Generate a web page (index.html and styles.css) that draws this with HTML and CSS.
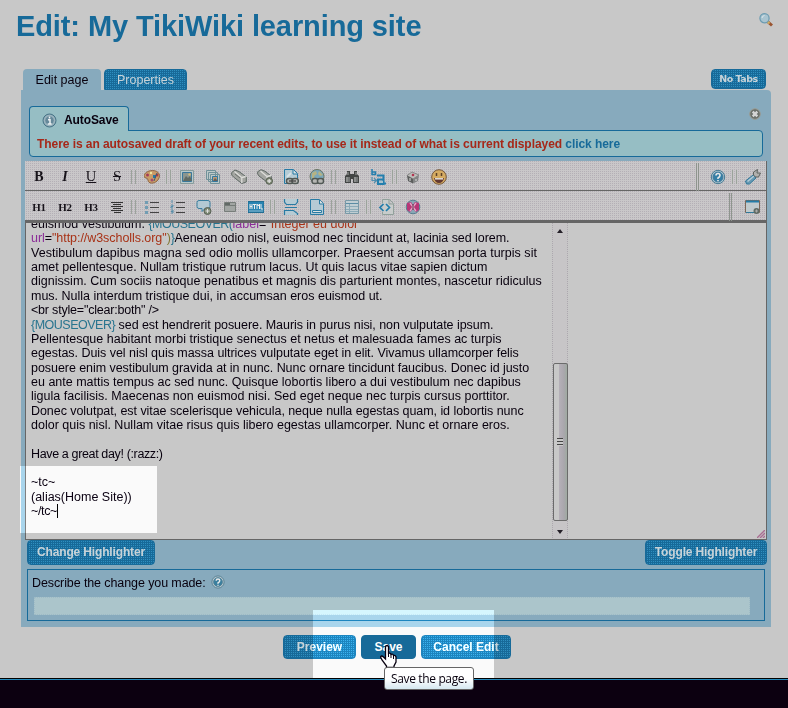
FILE: index.html
```html
<!DOCTYPE html>
<html lang="en">
<head>
<meta charset="utf-8">
<title>Edit: My TikiWiki learning site</title>
<link rel="stylesheet" href="styles.css">
</head>
<body>
<main class="page">
  <header class="head">
    <h1>Edit: My TikiWiki learning site</h1>
    <svg class="search" width="15" height="14" viewBox="0 0 15 14"><path d="M8.500 8.500l4.500 4" stroke="#9a5430" stroke-width="3"/><path d="M8.500 8.500l2 2" stroke="#d5b060" stroke-width="2"/><circle cx="5.500" cy="5.200" r="4.600" fill="#a9c4d0" stroke="#6b9bb1" stroke-width="1.200"/><path d="M3 5q0-2 2.500-2.500" stroke="#dce6ea" fill="none"/></svg>
  </header>
  <nav class="tabs"><span class="tab active">Edit page</span><span class="tab dark">Properties</span><span class="notabs dark">No Tabs</span></nav>
  <section class="panel">
    <div class="savetop">
      <div class="savetab"><svg width="15" height="15" viewBox="0 0 15 15"><circle cx="7.500" cy="7.500" r="6.500" fill="#8eabb8" stroke="#477386"/><circle cx="7.500" cy="7.500" r="4.800" fill="#66899a" stroke="#a9bfc7"/><path d="M7.500 3.500v2M6 6.700h2v4M5.700 11h4" stroke="#edf2f3" stroke-width="1.500" fill="none"/></svg>AutoSave</div>
      <svg class="close" width="12" height="12" viewBox="0 0 12 12"><circle cx="6" cy="6" r="5.300" fill="#6c706b" stroke="#9b9c93"/><path d="M3.700 3.700l4.600 4.600M8.300 3.700L3.700 8.300" stroke="#d5d5d5" stroke-width="2.400"/></svg>
    </div>
    <div class="notice"><span>There is an autosaved draft of your recent edits, to use it instead of what is current displayed <a>click here</a></span></div>

    <div class="toolbar first">
      <b class="tool">B</b><i class="tool bold">I</i><u class="tool plain">U</u><s class="tool plain">S</s><em class="sep"></em>
      <span class="tool"><svg viewBox="0 0 16 16"><path d="M8.500 1.500C3 1.500 0 5 0 7c0 3 4 1 4 4 0 4 6 4 9 1 5-5 2-10.500-4.500-10.500z" fill="#c99b68" stroke="#8e6544"/><circle cx="3.500" cy="6" r="1.500" fill="#a33b58"/><circle cx="7" cy="4" r="1.200" fill="#eee6a0"/><path d="M9 6h3v3H9z" fill="#2277a8"/><circle cx="13" cy="6" r="1.500" fill="#b43645"/><circle cx="8" cy="11" r="1.500" fill="#a24c6d"/><path d="M13 4l-3 8" stroke="#405d70"/></svg></span><em class="sep"></em>
      <span class="tool"><svg viewBox="0 0 16 16"><path d="M1.500 1.500h13v13h-13z" fill="#b9c9ca" stroke="#879c9c"/><path d="M3.500 3.500h9v9h-9z" fill="#8b9690" stroke="#39779a"/><path d="M4 12l3-5 2 2 2-2 2 5" fill="#616b64"/><circle cx="10.500" cy="5.500" r="1.200" fill="#d1bd7e"/></svg></span>
      <span class="tool"><svg viewBox="0 0 16 16"><path d="M1.500 1.500h9v9h-9zM3.500 3.500h9v9h-9zM5.500 5.500h9v9h-9z" fill="#bcc9ca" stroke="#719199"/><path d="M7.500 7.500h5v5h-5z" fill="#b99a79" stroke="#3279a0"/><path d="M8 12l2-3 3 3" fill="#655f5a"/></svg></span>
      <span class="tool"><svg viewBox="0 0 16 16"><path d="M.7 6V3.500L4 1l4 1.500 7.300 5.500v5l-4.500 1.500L2.500 8z" fill="#a3a5a1" stroke="#5f6965"/><path d="M3.500 2.500l7.300 6v5.500M10.800 8.500l4-1" fill="none" stroke="#dededb" stroke-width="1.300"/><path d="M4 5l5 4" stroke="#6d716e"/></svg></span>
      <span class="tool"><svg viewBox="0 0 16 16"><path d="M.7 5V2.700L4 .7l4 1.500 6.300 5v4.500L10 13 2 7z" fill="#a3a5a1" stroke="#5f6965"/><path d="M3.500 2l6.500 5.500V12M10 7.500l4-1" fill="none" stroke="#dededb" stroke-width="1.300"/><circle cx="12.200" cy="12" r="3.300" fill="#7f8a74" stroke="#596156"/><path d="M12.200 10v4M10.200 12h4" stroke="#ddd" stroke-width="1.300"/></svg></span>
      <span class="tool"><svg viewBox="0 0 16 16"><path d="M1.500.5h9l4 4v10h-13z" fill="#b5cbd5" stroke="#267aa5"/><path d="M10 1v4h4" fill="#dce4e6" stroke="#267aa5"/><path d="M4 8l4-4" stroke="#d7e2e6" stroke-width="2"/><rect x="3.500" y="9.500" width="6.500" height="5" rx="2.300" fill="#b5b6b3" stroke="#515855" stroke-width="1.500"/><rect x="9" y="9.500" width="6.300" height="5" rx="2.300" fill="#b5b6b3" stroke="#515855" stroke-width="1.500"/><path d="M6 12h7" stroke="#444" stroke-width="1.300"/></svg></span>
      <span class="tool"><svg viewBox="0 0 16 16"><circle cx="8" cy="7.500" r="7" fill="#7ba8bb" stroke="#6d7562"/><path d="M3 4l4-2 1 3-3 2 1 3-3 1M10 2l4 4-3 1-2-2z" fill="#b6b384"/><rect x="3" y="9.500" width="6" height="5" rx="2.300" fill="#b5b6b3" stroke="#515855" stroke-width="1.500"/><rect x="8.500" y="9.500" width="6" height="5" rx="2.300" fill="#b5b6b3" stroke="#515855" stroke-width="1.500"/></svg></span><em class="sep"></em>
      <span class="tool"><svg viewBox="0 0 16 16"><path d="M3 2h3v3h4V2h3v3l2 2v7H9v-4H7v4H1V7l2-2z" fill="#424544"/><path d="M2 8h4v5H2zM10 8h4v5h-4z" fill="#747777"/><path d="M4 3v3M12 3v3M3 8v5M11 8v5" stroke="#a4a6a4"/></svg></span>
      <span class="tool"><svg viewBox="0 0 16 16"><path d="M2 0v5.500h3.500V3H2" fill="none" stroke="#237fae" stroke-width="1.500"/><path d="M7 6.500h6.500V15H8v-4.500h5.500M13.500 14.500H16" fill="none" stroke="#237fae" stroke-width="2"/><path d="M2 8v3.500h4M4 9l2.500 2.500L4 14" fill="none" stroke="#4f8eaf" stroke-width="1.200"/><path d="M9 12h4v2H9z" fill="#a7c2ce"/></svg></span><em class="sep"></em>
      <span class="tool"><svg viewBox="0 0 16 16"><path d="M2 6.500L7 3l7 3-6 4z" fill="#bdbdba" stroke="#888"/><path d="M2 6.500L8 10v4.500L3 12z" fill="#5c5e5d"/><path d="M8 10l6-4-1 6-5 2.500z" fill="#828484"/><circle cx="8" cy="6" r="1.300" fill="#b23551"/><path d="M5 9v3M11 10v2" stroke="#ddd"/></svg></span>
      <span class="tool"><svg viewBox="0 0 16 16"><circle cx="8" cy="8" r="7.300" fill="#d5ab62" stroke="#75573b"/><path d="M5.500 4v3M10.500 4v3" stroke="#5c4027" stroke-width="1.500"/><path d="M3 9h10q-1 5-5 5T3 9z" fill="#623832"/><path d="M4 9.800h8" stroke="#e3e0dc" stroke-width="1.500"/></svg></span>
      <div class="right"><em class="tall"></em><span class="tool"><svg viewBox="0 0 16 16"><circle cx="8" cy="8" r="6.700" fill="#a9c3cf" stroke="#497b93"/><circle cx="8" cy="8" r="4.900" fill="#347fa6" stroke="#42799a"/><path d="M6 6.500q0-2 2-2t2 1.800Q10 8 8 9v1M8 11v1.300" stroke="#e8e8e8" stroke-width="1.600" fill="none"/></svg></span><em class="sep"></em><span class="tool last"><svg viewBox="0 0 16 16"><path d="M8 6l3 3-6.500 6H1.500L.5 12z" fill="#669ab4" stroke="#327798"/><path d="M2.500 12.500L9 7" stroke="#b5ced9" stroke-width="1.300"/><path d="M8.500 6V3l4-2.500-.5 3.500 3.500 0-2 4h-3z" fill="#b1b1ae" stroke="#5d625f"/></svg></span></div>
    </div>
    <div class="toolbar second">
      <b class="tool hh">H1</b><b class="tool hh">H2</b><b class="tool hh">H3</b>
      <span class="tool"><svg viewBox="0 0 16 16"><path d="M2 3.500h12M4 5.500h8M2 7.500h12M4 9.500h8M2 11.500h12M5 13.500h7" stroke="#333"/></svg></span><em class="sep"></em>
      <span class="tool"><svg viewBox="0 0 16 16"><path d="M6 3.500h9M6 8.500h9M6 13.500h9" stroke="#444"/><path d="M1 2h3v3H1zM1 7h3v3H1zM1 12h3v3H1z" fill="#719db3"/></svg></span>
      <span class="tool"><svg viewBox="0 0 16 16"><path d="M6 3.500h9M6 8.500h9M6 13.500h9" stroke="#444"/><path d="M2 1v3M1 6h2v1.500H1V9h2M1 11h2v3H1M1 12.500h2" stroke="#558ca8" fill="none"/></svg></span>
      <span class="tool"><svg viewBox="0 0 16 16"><path d="M3 1.500h9q2 0 2 2v4q0 2-2 2H9l-3 3v-3H3q-2 0-2-2v-4q0-2 2-2z" fill="#b3c9d3" stroke="#397f9f"/><circle cx="11.500" cy="12" r="3.500" fill="#7f8b75" stroke="#596156"/><path d="M11.500 10v4M9.500 12h4" stroke="#ddd"/></svg></span>
      <span class="tool"><svg viewBox="0 0 16 16"><path d="M2.500 3.500h11v9h-11z" fill="#a1a5a3" stroke="#777d7a"/><path d="M3 4h5v2H3z" fill="#616966"/><path d="M3 6.500h10" stroke="#747a77"/></svg></span>
      <span class="tool"><svg viewBox="0 0 16 16"><path d="M0 2.500h16v11H0z" fill="#2984b2" stroke="#216d92"/><path d="M2 5v5M4 5v5M2 7.500h2M5 5.500h3M6.500 5v5M9 10V5l1.200 2 1.300-2v5M13 5v5h2" stroke="#eee" fill="none"/><path d="M1 12h14" stroke="#8cb8cd"/></svg></span><em class="sep"></em>
      <span class="tool"><svg viewBox="0 0 16 16"><path d="M1.500 0v3l2 2.500h9l2-2.500V0M2 8.500h12M1.500 16v-4.500h9l4 3V16" fill="#b6cbd4" stroke="#287ba4" stroke-width="1.200"/></svg></span>
      <span class="tool"><svg viewBox="0 0 16 16"><path d="M1.500.5h9l4 4v11h-13z" fill="#b5cbd5" stroke="#287ba4"/><path d="M10.500 1v4h4M3.500 11.500h9v2h-9z" fill="#dce3e4" stroke="#287ba4"/></svg></span><em class="sep"></em>
      <span class="tool"><svg viewBox="0 0 16 16"><path d="M1.500 1.500h13v13h-13z" fill="#c0ced3" stroke="#7899a7"/><path d="M2 4.500h12" stroke="#5b8ca4"/><path d="M5.500 5v9M2 7.500h12M2 10.500h12M2 12.500h12" stroke="#8cabb8"/></svg></span><em class="sep"></em>
      <span class="tool"><svg viewBox="0 0 16 16"><path d="M3.500 4V.5h7l4 4v11h-11V13M10 1v4h4" fill="#c8cccb" stroke="#91a19b"/><path d="M4.500 5L1 8.500 4.500 12M7 5l3.500 3.500L7 12" stroke="#237daa" stroke-width="1.700" fill="none"/></svg></span>
      <span class="tool"><svg viewBox="0 0 16 16"><circle cx="8" cy="8" r="6.800" fill="#87a7b5" stroke="#587d90"/><path d="M2 4l4-1 2 3 2-3 4 1v7l-3 2-3-3-3 3-3-2z" fill="#b83677"/><path d="M5 4l6 8M11 4l-6 8" stroke="#e3a9c7" stroke-width="1.300"/><path d="M8 5v6" stroke="#5c3651"/></svg></span>
      <div class="right"><em class="tall"></em><span class="tool last"><svg viewBox="0 0 16 16"><path d="M.5 1.500h14v12H.5z" fill="#c0cacd" stroke="#7d6758"/><path d="M1 2.500h13" stroke="#237ca8" stroke-width="2"/><path d="M1 13.500h8" stroke="#327a9b"/><circle cx="11.500" cy="12" r="3" fill="#606b65"/><path d="M10 12h3M11.500 10.500v3" stroke="#aaa"/></svg></span></div>
    </div>

    <div class="editor">
      <div class="text">
        <p>euismod vestibulum. <span class="teal">{MOUSEOVER(</span><span class="purple">label</span>=<span class="red">"Integer eu dolor"</span></p>
        <p class="t1"><span class="purple">url</span>=<span class="red">"http://w3scholls.org"</span><span class="olive">)</span><span class="teal">}</span>Aenean odio nisl, euismod nec tincidunt at, lacinia sed lorem.</p>
        <p class="w1">Vestibulum dapibus magna sed odio mollis ullamcorper. Praesent accumsan porta turpis sit</p>
        <p>amet pellentesque. Nullam tristique rutrum lacus. Ut quis lacus vitae sapien dictum</p>
        <p class="w1">dignissim. Cum sociis natoque penatibus et magnis dis parturient montes, nascetur ridiculus</p>
        <p>mus. Nulla interdum tristique dui, in accumsan eros euismod ut.</p>
        <p class="t3">&lt;br style="clear:both" /&gt;</p>
        <p class="t1"><span class="teal">{MOUSEOVER}</span> sed est hendrerit posuere. Mauris in purus nisi, non vulputate ipsum.</p>
        <p>Pellentesque habitant morbi tristique senectus et netus et malesuada fames ac turpis</p>
        <p class="t2">egestas. Duis vel nisl quis massa ultrices vulputate eget in elit. Vivamus ullamcorper felis</p>
        <p class="t1">posuere enim vestibulum gravida at in nunc. Nunc ornare tincidunt faucibus. Donec id justo</p>
        <p>eu ante mattis tempus ac sed nunc. Quisque lobortis libero a dui vestibulum nec dapibus</p>
        <p class="w1">ligula facilisis. Maecenas non euismod nisi. Sed eget neque nec turpis cursus porttitor.</p>
        <p class="t1">Donec volutpat, est vitae scelerisque vehicula, neque nulla egestas quam, id lobortis nunc</p>
        <p>dolor quis nisl. Nullam vitae risus quis libero egestas ullamcorper. Nunc et ornare eros.</p>
        <p></p>
        <p class="t4">Have a great day! (:razz:)</p>
        <p></p>
        <p>~tc~</p>
        <p>(alias(Home Site))</p>
        <p class="t4">~/tc~<span class="caret"></span></p>
      </div>
      <div class="scroll"><span class="arrow up"></span><div class="thumb"><span class="grip"></span></div><span class="arrow"></span></div>
      <svg class="resize" width="8" height="8" viewBox="0 0 8 8"><path d="M0 8L8 0M3 8l5-5M6 8l2-2" stroke="#a96d91" stroke-width="1.400"/></svg>
    </div>
    <div class="hlrow"><span class="button dark change">Change Highlighter</span><span class="button dark toggle">Toggle Highlighter</span></div>
    <div class="describe">
      <label>Describe the change you made: <svg width="14" height="14" viewBox="0 0 16 16"><circle cx="8" cy="8" r="7" fill="#b1c4cc" stroke="#577f91"/><circle cx="8" cy="8" r="5" fill="#397f9f" stroke="#527f95"/><path d="M6 6.500q0-2 2-2t2 1.800Q10 8 8 9v1M8 11v1.300" stroke="#e8e8e8" stroke-width="1.700" fill="none"/></svg></label>
      <div class="field"></div>
    </div>
  </section>
  <div class="actions"><span class="button dark preview">Preview</span><span class="button dark save">Save</span><span class="button dark cancel">Cancel Edit</span></div>
</main>
<footer></footer>
<div class="spot spot-text"></div>
<div class="spot spot-save"></div>
<svg class="hand" width="17" height="23" viewBox="0 0 17 23"><path d="M5.500 1.500q1.500-2 3 0v7q2-1 2.500 1 2-1 2.500 1 2-.5 2.500 1.500v5l-2 4v1.500H6.500V21L2 15l-1.500-3q1-2 3 0l2 2z" fill="#fff" stroke="#080010" stroke-width="1.300"/><path d="M8.500 8v4M11 9.500V13M13.500 11v3" stroke="#080010"/></svg>
<div class="tooltip">Save the page.</div>
</body>
</html>
```
FILE: styles.css
```css
* { box-sizing: border-box; }
body { margin: 0; width: 788px; height: 708px; overflow: hidden; position: relative; background: #c8c8c8; color: #08000e; font: 12.5px "Liberation Sans", Arial, sans-serif; }
.page { height: 678px; overflow: hidden; background: #c8c8c8; }
.head { height: 69px; padding: 8px 14px 0 16px; display: flex; justify-content: space-between; align-items: flex-start; }
h1 { margin: 0; color: #176a99; font-size: 29px; letter-spacing: -.1px; line-height: 36px; white-space: nowrap; }
.search { margin-top: 5px; }
.dark { color: #c8d3d8; border: 1px solid #176a99; background: conic-gradient(#2f8fc0 25%, #176a99 0) 0 0 / 2px 2px; }
.tabs { height: 21px; margin: 0 22px 0 23px; display: flex; align-items: flex-start; }
.tab { height: 21px; line-height: 20px; text-align: center; border-radius: 4px 4px 0 0; }
.active { width: 78px; margin-right: 3px; background: #87aabd; line-height: 22px; }
.tab.dark { width: 83px; }
.notabs { width: 55px; height: 20px; margin-left: auto; border-radius: 4px; font: bold 9.5px/18px "DejaVu Sans", sans-serif; letter-spacing: -.5px; text-align: center; }
.panel { width: 750px; height: 537px; margin-left: 21px; padding: 16px 4px 0; border-radius: 0 4px 0 0; background: #87aabd; }
.savetop { height: 24px; margin: 0 4px; display: flex; justify-content: space-between; }
.savetab { position: relative; z-index: 1; width: 100px; height: 25px; padding: 2px 0 0 12px; display: flex; align-items: center; gap: 7px; border: 1px solid #176a99; border-bottom: 0; border-radius: 4px 4px 0 0; background: #96bec4; font-weight: bold; font-size: 12px; letter-spacing: -.1px; }
.close { margin: 2px 2px 0 0; }
.notice { width: 734px; height: 27px; margin-left: 4px; padding-left: 7px; border: 1px solid #176a99; border-radius: 0 4px 4px 4px; background: #96bec4; color: #a62819; font-weight: bold; font-size: 12px; letter-spacing: -.06px; line-height: 26px; white-space: nowrap; }
.notice a { color: #176a99; }
.toolbar { width: 742px; height: 30px; margin-top: 4px; padding-left: 1px; display: flex; align-items: center; border-right: 1px solid #666; border-bottom: 1px solid #666; background: conic-gradient(#b4afb6 25%, #c9c7c9 0) 0 0 / 2px 2px; }
.first { padding-top: 2px; }
.second { margin-top: 0; padding-top: 2px; }
.tool { width: 26px; height: 20px; flex: none; display: flex; align-items: center; justify-content: center; font-family: "Liberation Serif", serif; font-size: 14px; color: #17131a; }
.bold { font-weight: bold; }
.plain { font-size: 14.5px; }
.tool.hh { font-size: 11px; letter-spacing: -.3px; }
.tool svg { width: 16px; height: 16px; }
.sep { width: 9px; height: 14px; flex: none; }
.sep::before { content: ""; display: block; width: 3px; height: 14px; margin-left: 1px; border: solid #9ba39b; border-width: 0 1px; }
.right { display: flex; align-items: center; margin-left: auto; }
.tall { width: 3px; height: 28px; margin-right: 6px; border: solid #8e958e; border-width: 0 1px; }
.second .tall { margin-right: 8px; }
.editor { position: relative; width: 742px; height: 319px; overflow: hidden; display: flex; border: 1px solid #666; border-top-width: 2px; background: #c8c8c8; }
.text { width: 526px; padding: 0 0 0 5px; margin-top: -6px; font-size: 12.5px; line-height: 14.37px; white-space: nowrap; }
.text p { height: 14.37px; margin: 0; }
.text .w1 { letter-spacing: .025px; }
.text .t1 { letter-spacing: -.055px; }
.text .t2 { letter-spacing: -.035px; }
.text .t3 { letter-spacing: -.2px; }
.text .t4 { letter-spacing: -.36px; }
.teal { color: #28748f; letter-spacing: -.5px; } .purple { color: #8b2d98; } .red { color: #a83216; } .olive { color: #837837; }
.caret { display: inline-block; width: 1px; height: 14px; vertical-align: -3px; background: #000; }
.scroll { width: 16px; height: 317px; display: flex; flex-direction: column; align-items: center; border: dotted #aca8ae; border-width: 0 1px; background: #c7c5c7; padding: 6px 0; }
.arrow { width: 0; height: 0; margin-top: auto; border: solid transparent; border-width: 4px 3.5px 0; border-top-color: #252028; }
.up { margin-top: 0; transform: rotate(180deg); }
.thumb { width: 15px; height: 158px; margin-top: 130px; display: flex; align-items: center; justify-content: center; border: 1px solid #6b6b6b; border-radius: 2px; background: linear-gradient(90deg, #c8c8c8 40%, #b5b0b8 40%, #aaa7ad 75%, #9faaa1); }
.grip { width: 6px; height: 8px; background: repeating-linear-gradient(#444 0 1px, #c8c8c8 1px 3px); }
.resize { position: absolute; right: 1px; bottom: 1px; }
.button { display: flex; justify-content: center; height: 24px; border-radius: 4px; font-weight: bold; line-height: 22px; font-size: 12px; }
.hlrow { height: 29px; padding-left: 2px; display: flex; justify-content: space-between; }
.hlrow .button { height: 25px; letter-spacing: -.15px; }
.change { width: 128px; } .toggle { width: 122px; }
.describe { width: 738px; height: 52px; margin-left: 2px; padding: 5px 4px 0; border: 1px solid #176a99; }
.describe label { display: flex; align-items: center; gap: 5px; height: 16px; line-height: 16px; letter-spacing: -.1px; }
.describe svg { position: relative; top: -1px; }
.field { width: 716px; height: 18px; margin: 6px 0 0 2px; background: #abc5cb; border: 1px dotted #9ebbc6; }
.actions { display: flex; gap: 5px; margin: 8px 0 0 283px; }
.preview { width: 73px; } .save { width: 55px; } .cancel { width: 90px; }
.save { position: relative; z-index: 3; color: #fff; background: #176a99; }
footer { height: 30px; border-top: 1px solid #000; background: linear-gradient(#268bbc 1px, #0c0010 1px); }
.spot { position: absolute; z-index: 2; background: #333; mix-blend-mode: color-dodge; }
.spot-text { left: 20px; top: 466px; width: 137px; height: 67px; }
.spot-save { left: 313px; top: 610px; width: 181px; height: 68px; }
.hand { position: absolute; z-index: 4; left: 380px; top: 645px; }
.tooltip { position: absolute; z-index: 5; left: 384px; top: 667px; width: 90px; height: 23px; border: 1px solid #666; border-radius: 3px; background: linear-gradient(#fff 50%, #d5e8f0); font: 12px/22px "Open Sans", sans-serif; letter-spacing: -.35px; text-align: center; white-space: nowrap; }
```
